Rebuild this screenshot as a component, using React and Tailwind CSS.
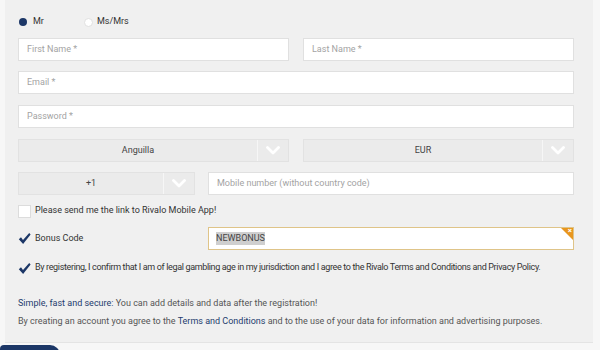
import React from "react";

const font = { fontFamily: "Roboto, 'Liberation Sans', sans-serif" };

function Chevron() {
  return (
    <svg width="14" height="9" viewBox="0 0 14 9">
      <path d="M1.5 1.5 L7 7 L12.5 1.5" fill="none" stroke="#ffffff" strokeWidth="2.8" strokeLinecap="round" strokeLinejoin="round" />
    </svg>
  );
}

function Check() {
  return (
    <svg width="13" height="13" viewBox="0 0 13 13">
      <path d="M0.8 7.2 L3 5.3 L5 8 L11.2 1 L12.6 2.6 L5.1 12 Z" fill="#1c3767" />
    </svg>
  );
}

function Input({ placeholder, className = "" }) {
  return (
    <div className={`h-[23px] bg-white border border-[#e0e0e0] flex items-center pl-[8px] text-[9px] text-[#a3a3a3] ${className}`}>
      {placeholder}
    </div>
  );
}

function Select({ value, className = "" }) {
  return (
    <div className={`h-[23px] bg-[#ebebeb] border border-[#e2e2e2] flex ${className}`}>
      <div className="flex-1 flex items-center justify-center text-[9px] text-[#444]">{value}</div>
      <div className="w-[31px] border-l border-[#f6f6f6] flex items-center justify-center">
        <Chevron />
      </div>
    </div>
  );
}

export default function App() {
  return (
    <div className="w-[600px] h-[350px] bg-[#f7f7f7] relative overflow-hidden" style={font}>
      <div className="ml-[5px] w-[588px] h-[343px] bg-[#f0f0f0] border-b border-[#e4e4e4] pl-[13px] pt-[15px]">
        <div className="flex items-center h-[14px] text-[9px] text-[#333]">
          <div className="w-[8px] h-[8px] rounded-full bg-[#1c3767] ml-[1px]" />
          <span className="ml-[6px]">Mr</span>
          <div className="w-[9px] h-[9px] rounded-full bg-white border border-[#e0e0e0] ml-[40px]" />
          <span className="ml-[4px]">Ms/Mrs</span>
        </div>
        <div className="flex gap-[14px] mt-[9px]">
          <Input placeholder="First Name *" className="w-[271px]" />
          <Input placeholder="Last Name *" className="w-[271px]" />
        </div>
        <Input placeholder="Email *" className="w-[556px] mt-[10px]" />
        <Input placeholder="Password *" className="w-[556px] mt-[11px]" />
        <div className="flex gap-[14px] mt-[11px]">
          <Select value="Anguilla" className="w-[271px]" />
          <Select value="EUR" className="w-[271px]" />
        </div>
        <div className="flex gap-[13px] mt-[10px]">
          <Select value="+1" className="w-[177px]" />
          <Input placeholder="Mobile number (without country code)" className="w-[366px]" />
        </div>
        <div className="flex items-center mt-[9px] h-[14px]">
          <div className="w-[13px] h-[13px] bg-white border border-[#dcdcdc]" />
          <span className="ml-[4px] text-[9px] text-[#333]">Please send me the link to Rivalo Mobile App!</span>
        </div>
        <div className="flex items-center mt-[9px]">
          <div className="w-[177px] flex items-center">
            <Check />
            <span className="ml-[4px] text-[9px] text-[#333]">Bonus Code</span>
          </div>
          <div className="ml-[13px] w-[366px] h-[23px] bg-white border border-[#dfc488] relative flex items-center pl-[7px]">
            <span className="text-[9px] text-[#444] bg-[#cfcfcf]">NEWBONUS</span>
            <div className="absolute right-0 top-0 w-0 h-0 border-t-[12px] border-l-[12px] border-t-[#e8961e] border-l-transparent" />
            <span className="absolute right-[1px] top-[-3px] text-[8px] leading-[12px] text-white font-bold">×</span>
          </div>
        </div>
        <div className="flex items-center mt-[11px] h-[14px]">
          <Check />
          <span className="ml-[4px] text-[9px] text-[#333] tracking-[-0.35px]">
            By registering, I confirm that I am of legal gambling age in my jurisdiction and I agree to the Rivalo Terms and Conditions and Privacy Policy.
          </span>
        </div>
        <div className="mt-[22px] text-[9px] text-[#555] leading-[12px]">
          <span className="text-[#1e3c6e]">Simple, fast and secure:</span> You can add details and data after the registration!
        </div>
        <div className="mt-[6px] text-[9px] text-[#555] leading-[12px]">
          By creating an account you agree to the <span className="text-[#1e3c6e]">Terms and Conditions</span> and to the use of your data for information and advertising purposes.
        </div>
      </div>
      <div className="absolute left-0 top-[345px] w-[60px] h-[12px] bg-[#1c3767] rounded-tr-[10px] rounded-tl-[4px]" />
    </div>
  );
}
